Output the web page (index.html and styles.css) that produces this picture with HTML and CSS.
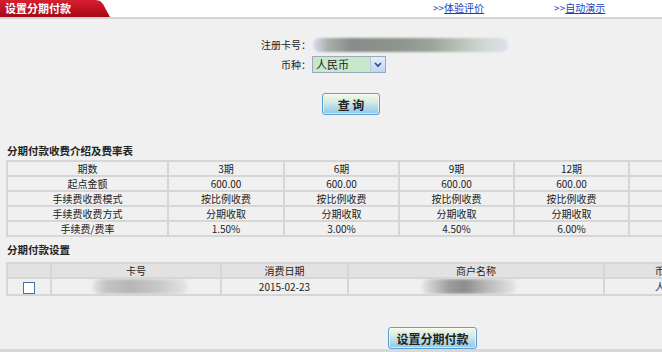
FILE: index.html
```html
<!DOCTYPE html>
<html lang="zh-CN">
<head>
  <meta charset="UTF-8" />
  <title>设置分期付款</title>
  <link rel="stylesheet" href="styles.css">
</head>
<body>
  <div class="topbar">
    <div class="tab">设置分期付款</div>
    <div class="links">
      <span class="link">&gt;&gt;<a href="#">体验评价</a></span>
      <span class="link">&gt;&gt;<a href="#">自动演示</a></span>
    </div>
  </div>

  <div class="query">
    <div class="row">
      <span class="label">注册卡号：</span>
      <div class="blur-field"></div>
    </div>
    <div class="row">
      <span class="label">币种：</span>
      <div class="select">
        <span class="select-text">人民币</span>
        <span class="select-arrow">
          <svg width="8" height="6" viewBox="0 0 8 6"><path d="M1 1 L4 4 L7 1" fill="none" stroke="#2a4a8a" stroke-width="1.6"/></svg>
        </span>
      </div>
    </div>
    <div class="btn-row">
      <button class="btn btn-query">查 询</button>
    </div>
  </div>

  <h2 class="title">分期付款收费介绍及费率表</h2>
  <table class="grid rates">
    <colgroup>
      <col style="width:161px"><col style="width:116px"><col style="width:115px">
      <col style="width:115px"><col style="width:115px"><col style="width:118px">
    </colgroup>
    <tr><td>期数</td><td>3期</td><td>6期</td><td>9期</td><td>12期</td><td></td></tr>
    <tr><td>起点金额</td><td>600.00</td><td>600.00</td><td>600.00</td><td>600.00</td><td></td></tr>
    <tr><td>手续费收费模式</td><td>按比例收费</td><td>按比例收费</td><td>按比例收费</td><td>按比例收费</td><td></td></tr>
    <tr><td>手续费收费方式</td><td>分期收取</td><td>分期收取</td><td>分期收取</td><td>分期收取</td><td></td></tr>
    <tr><td>手续费/费率</td><td>1.50%</td><td>3.00%</td><td>4.50%</td><td>6.00%</td><td></td></tr>
  </table>

  <h2 class="title title-2">分期付款设置</h2>
  <table class="grid setup">
    <colgroup>
      <col style="width:44px"><col style="width:170px"><col style="width:127px">
      <col style="width:256px"><col style="width:120px">
    </colgroup>
    <tr class="head"><td></td><td>卡号</td><td>消费日期</td><td>商户名称</td><td class="edge">币种</td></tr>
    <tr>
      <td><span class="check"></span></td>
      <td><div class="blur blur-card"></div></td>
      <td>2015-02-23</td>
      <td><div class="blur blur-shop"></div></td>
      <td class="edge">人民币</td>
    </tr>
  </table>

  <div class="submit-row">
    <button class="btn btn-submit">设置分期付款</button>
  </div>
  <div class="bottombar"></div>
</body>
</html>
```

FILE: styles.css
```css
:root {
  --bg: #f0f0f0;
  --line: #d6d6d6;
  --text: #222;
  --link: #1a3fc0;
}

html, body {
  height: 100%;
  overflow: hidden;
}

body {
  margin: 0;
  background: var(--bg);
  color: var(--text);
  font-family: "Noto Sans CJK SC", "Liberation Sans", sans-serif;
  font-size: 10px;
}

/* top bar */
.topbar {
  display: flex;
  height: 17px;
  background: #fff;
  border-bottom: 2px solid #d4d4d4;
}

.tab {
  width: 110px;
  padding-left: 5px;
  box-sizing: border-box;
  background: linear-gradient(#d42030, #b80e1c 70%, #a00a16);
  color: #fff;
  font-weight: bold;
  font-size: 11px;
  line-height: 16px;
  clip-path: polygon(0 0, 96px 0, 100px 1px, 103px 4px, 110px 17px, 0 17px);
}

.links {
  display: flex;
  padding-left: 323px;
  gap: 70px;
  line-height: 16px;
}

.link {
  color: var(--link);
  font-size: 10px;
}

.link a {
  color: var(--link);
  text-decoration: underline;
}

/* query form */
.query {
  padding-top: 17px;
}

.row {
  display: flex;
  align-items: center;
  height: 17px;
  margin-bottom: 3px;
}

.label {
  width: 311px;
  text-align: right;
  font-size: 10px;
}

.blur-field {
  width: 195px;
  height: 14px;
  margin-left: 2px;
  border-radius: 7px;
  background: linear-gradient(90deg, #dde 0, #a8ada8 8%, #888c88 20%, #8f958f 45%, #9aa39a 60%, #b9c2b9 75%, #d0d8d4 88%, #dde0ee 100%);
  filter: blur(1px);
}

.select {
  display: flex;
  width: 74px;
  height: 17px;
  margin-left: 1px;
  border: 1px solid #9ab;
  box-sizing: border-box;
  background: #fff;
}

.select-text {
  flex: 1;
  background: #c8e8cc;
  font-size: 11px;
  line-height: 15px;
  padding-left: 3px;
}

.select-arrow {
  width: 14px;
  display: flex;
  align-items: center;
  justify-content: center;
  background: linear-gradient(#e6eefc, #c2d4f2);
  border-left: 1px solid #b8c8e0;
}

.btn-row {
  padding-top: 17px;
  padding-left: 322px;
}

.btn {
  border: 1px solid #5aa0d4;
  border-radius: 3px;
  background: linear-gradient(#f6fadc, #cfe8e8 45%, #8ec6ea);
  font-family: "Noto Sans CJK SC", sans-serif;
  font-weight: bold;
  color: #222;
  padding: 0;
  box-shadow: inset 0 0 0 1px rgba(255,255,255,0.6);
}

.btn-query {
  width: 58px;
  height: 22px;
  font-size: 12px;
}

/* section titles */
.title {
  margin: 29px 0 0;
  padding-left: 7px;
  font-size: 10.5px;
  font-weight: bold;
  line-height: 14px;
}

.title-2 {
  margin-top: 6px;
}

/* tables */
.grid {
  margin-left: 6px;
  border-collapse: collapse;
  table-layout: fixed;
  border: 2px solid var(--line);
}

.grid td {
  border: 2px solid var(--line);
  height: 13px;
  padding: 0;
  line-height: 13px;
  text-align: center;
  font-size: 10px;
  white-space: nowrap;
  overflow: hidden;
}

.grid td.edge {
  text-align: left;
  padding-left: 50px;
}

.rates {
  width: 740px;
  margin-top: 2px;
}

.setup {
  width: 717px;
  margin-top: 5px;
}

.setup .head td {
  background: #e2e2e2;
}

.setup tr + tr td {
  height: 14px;
}

.check {
  display: inline-block;
  width: 10px;
  height: 10px;
  border: 1px solid #4a6fa8;
  background: #fff;
  vertical-align: middle;
}

.blur {
  height: 15px;
  filter: blur(1.5px);
  border-radius: 8px;
}

.blur-card {
  width: 96px;
  margin-left: 40px;
  background: linear-gradient(90deg, #e4e4e4 0, #c2c2c2 15%, #b6b6b6 40%, #c8c8c8 70%, #e6e6e6 100%);
}

.blur-shop {
  width: 96px;
  margin-left: 72px;
  background: linear-gradient(90deg, #e8e8e8 0, #9a9a9a 30%, #8c8c8c 45%, #bababa 70%, #e8e8e8 100%);
}

/* bottom */
.submit-row {
  padding-top: 31px;
  padding-left: 388px;
}

.btn-submit {
  width: 89px;
  height: 22px;
  font-size: 12px;
}

.bottombar {
  height: 4px;
  background: #d8d8d8;
}
```
